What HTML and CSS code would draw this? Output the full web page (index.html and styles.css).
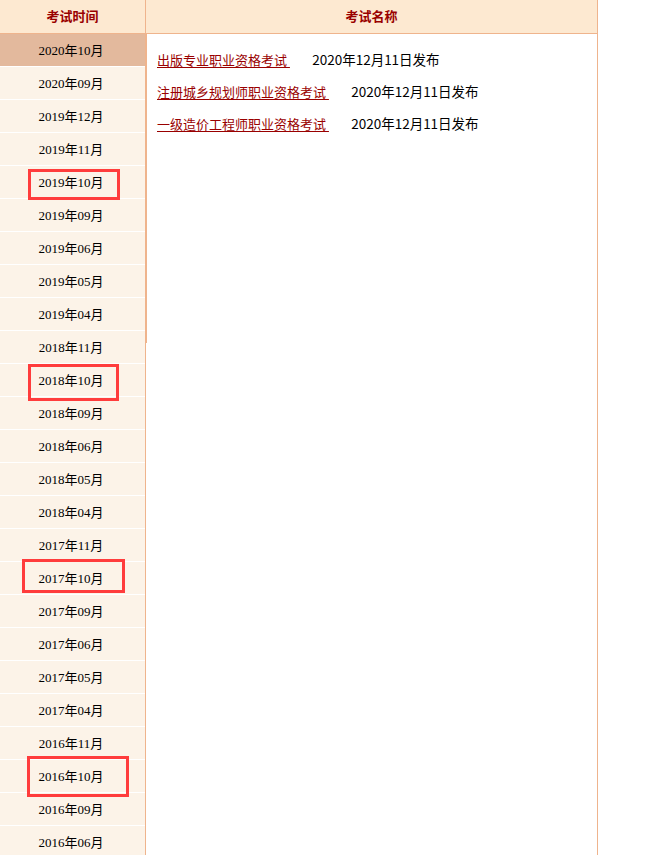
FILE: index.html
```html
<!DOCTYPE html>
<html lang="zh-CN">
  <head>
    <meta charset="UTF-8" />
    <meta name="viewport" content="width=device-width, initial-scale=1.0" />
    <title>考试成绩发布</title>
    <link rel="stylesheet" href="styles.css">
  </head>
  <body>
    <div class="exam-table">
      <div class="side">
        <div class="head">考试时间</div>
        <ul class="month-list">
          <li class="active">2020年10月</li>
          <li>2020年09月</li>
          <li>2019年12月</li>
          <li>2019年11月</li>
          <li>2019年10月<span class="mark mark-2019"></span></li>
          <li>2019年09月</li>
          <li>2019年06月</li>
          <li>2019年05月</li>
          <li>2019年04月</li>
          <li>2018年11月</li>
          <li>2018年10月<span class="mark mark-2018"></span></li>
          <li>2018年09月</li>
          <li>2018年06月</li>
          <li>2018年05月</li>
          <li>2018年04月</li>
          <li>2017年11月</li>
          <li>2017年10月<span class="mark mark-2017"></span></li>
          <li>2017年09月</li>
          <li>2017年06月</li>
          <li>2017年05月</li>
          <li>2017年04月</li>
          <li>2016年11月</li>
          <li>2016年10月<span class="mark mark-2016"></span></li>
          <li>2016年09月</li>
          <li>2016年06月</li>
        </ul>
      </div>

      <div class="main">
        <div class="head">考试名称</div>
        <div class="exam-body">
          <ul class="exam-list">
            <li>
              <a href="#">出版专业职业资格考试&nbsp;</a>
              <span class="date">2020年12月11日发布</span>
            </li>
            <li>
              <a href="#">注册城乡规划师职业资格考试&nbsp;</a>
              <span class="date">2020年12月11日发布</span>
            </li>
            <li>
              <a href="#">一级造价工程师职业资格考试&nbsp;</a>
              <span class="date">2020年12月11日发布</span>
            </li>
          </ul>
        </div>
      </div>
    </div>
  </body>
</html>
```

FILE: styles.css
```css
html,
body {
  overflow: hidden;
}

body {
  margin: 0;
  background-color: #fff;
  font-family: "Liberation Serif", "Noto Sans CJK SC", serif;
  font-size: 13px;
  color: #000;
}

ul {
  list-style: none;
  margin: 0;
  padding: 0;
}

.exam-table {
  display: flex;
  width: 598px;
  min-height: 900px;
}

.head {
  height: 33px;
  line-height: 32px;
  background-color: #fde9d1;
  border-bottom: 1px solid #efb48d;
  color: #990000;
  font-family: "Noto Sans CJK SC", sans-serif;
  font-weight: bold;
  font-size: 13px;
  text-align: center;
}

/* left column */
.side {
  width: 145px;
  border-right: 1px solid #efb48d;
  background-color: #fcf3e8;
}

.month-list li {
  position: relative;
  height: 32px;
  line-height: 34px;
  border-bottom: 1px solid #fff;
  text-align: center;
  padding-right: 3px;
}

.month-list li.active {
  background-color: #e3b99d;
}

/* red annotation boxes */
.mark {
  position: absolute;
  z-index: 2;
  box-sizing: border-box;
  border: 3px solid #ff3c3c;
}

.mark-2019 {
  top: 3px;
  left: 28px;
  width: 92px;
  height: 31px;
}

.mark-2018 {
  top: 0;
  left: 28px;
  width: 91px;
  height: 37px;
}

.mark-2017 {
  top: -3px;
  left: 22px;
  width: 103px;
  height: 34px;
}

.mark-2016 {
  top: -4px;
  left: 27px;
  width: 102px;
  height: 41px;
}

/* right column */
.main {
  width: 451px;
  border-right: 1px solid #efb48d;
}

.exam-body {
  min-height: 309px;
  border-left: 1px solid #efb48d;
  padding: 9px 10px 0;
  box-sizing: border-box;
}

.exam-list li {
  height: 32px;
  line-height: 32px;
  white-space: nowrap;
}

.exam-list a {
  color: #990000;
  font-family: "Noto Sans CJK SC", sans-serif;
  font-size: 13px;
  text-decoration: underline;
  text-underline-offset: 2px;
}

.date {
  margin-left: 19px;
  font-family: "Noto Sans CJK SC", sans-serif;
  font-size: 13.5px;
  color: #000;
}
```
